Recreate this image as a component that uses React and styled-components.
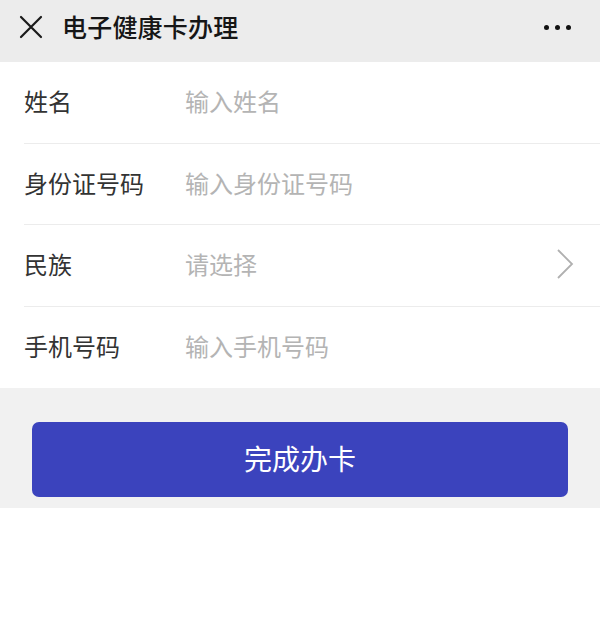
import React from "react";
import styled, { createGlobalStyle } from "styled-components";

const Global = createGlobalStyle`
  html, body { margin: 0; padding: 0; background: #ffffff; }
  body { font-family: "Noto Sans CJK SC", "Noto Sans", sans-serif; }
  * { box-sizing: border-box; }
`;

const Page = styled.div`
  width: 600px;
  display: flex;
  flex-direction: column;
`;

const Header = styled.header`
  height: 62px;
  background: #ececec;
  display: flex;
  align-items: center;
  padding: 0 29px 9px 18px;
`;

const CloseBtn = styled.div`
  width: 26px;
  height: 26px;
  display: flex;
  align-items: center;
  justify-content: center;
  margin-right: 18px;
`;

const Title = styled.h1`
  margin: 0;
  flex: 1;
  font-size: 25px;
  font-weight: 500;
  color: #161616;
  letter-spacing: 0.2px;
  line-height: 1;
`;

const Dots = styled.div`
  display: flex;
  gap: 6px;
  align-items: center;
  padding-top: 2px;
`;

const Dot = styled.span`
  width: 5px;
  height: 5px;
  border-radius: 50%;
  background: #111;
`;

const Form = styled.div`
  background: #fff;
  display: flex;
  flex-direction: column;
`;

const Row = styled.div`
  height: 81.5px;
  display: flex;
  align-items: center;
  padding: 0 26px 3px 24px;
  position: relative;
  &:not(:last-child)::after {
    content: "";
    position: absolute;
    left: 24px;
    right: 0;
    bottom: 0;
    height: 1px;
    background: #ececec;
  }
`;

const Label = styled.div`
  width: 161px;
  font-size: 24px;
  color: #333;
  line-height: 1;
`;

const Placeholder = styled.div`
  flex: 1;
  font-size: 24px;
  color: #b4b4b4;
  line-height: 1;
`;

const Footer = styled.div`
  background: #f1f1f1;
  padding: 34px 32px 11px;
`;

const Button = styled.button`
  width: 100%;
  height: 75px;
  border: none;
  border-radius: 7px;
  background: #3b43bd;
  color: #fff;
  font-family: inherit;
  font-size: 28px;
  line-height: 1;
  display: flex;
  align-items: center;
  justify-content: center;
  padding: 0 0 4px;
`;

const rows = [
  { label: "姓名", ph: "输入姓名" },
  { label: "身份证号码", ph: "输入身份证号码" },
  { label: "民族", ph: "请选择", arrow: true },
  { label: "手机号码", ph: "输入手机号码" },
];

export default function App() {
  return (
    <Page>
      <Global />
      <Header>
        <CloseBtn>
          <svg width="24" height="24" viewBox="0 0 24 24">
            <path d="M2 2 L22 22 M22 2 L2 22" stroke="#1a1a1a" strokeWidth="2.2" strokeLinecap="round" />
          </svg>
        </CloseBtn>
        <Title>电子健康卡办理</Title>
        <Dots>
          <Dot />
          <Dot />
          <Dot />
        </Dots>
      </Header>
      <Form>
        {rows.map((r) => (
          <Row key={r.label}>
            <Label>{r.label}</Label>
            <Placeholder>{r.ph}</Placeholder>
            {r.arrow && (
              <svg width="18" height="30" viewBox="0 0 18 30">
                <path d="M2 1 L16 15 L2 29" fill="none" stroke="#b0b0b0" strokeWidth="1.8" />
              </svg>
            )}
          </Row>
        ))}
      </Form>
      <Footer>
        <Button>完成办卡</Button>
      </Footer>
    </Page>
  );
}
